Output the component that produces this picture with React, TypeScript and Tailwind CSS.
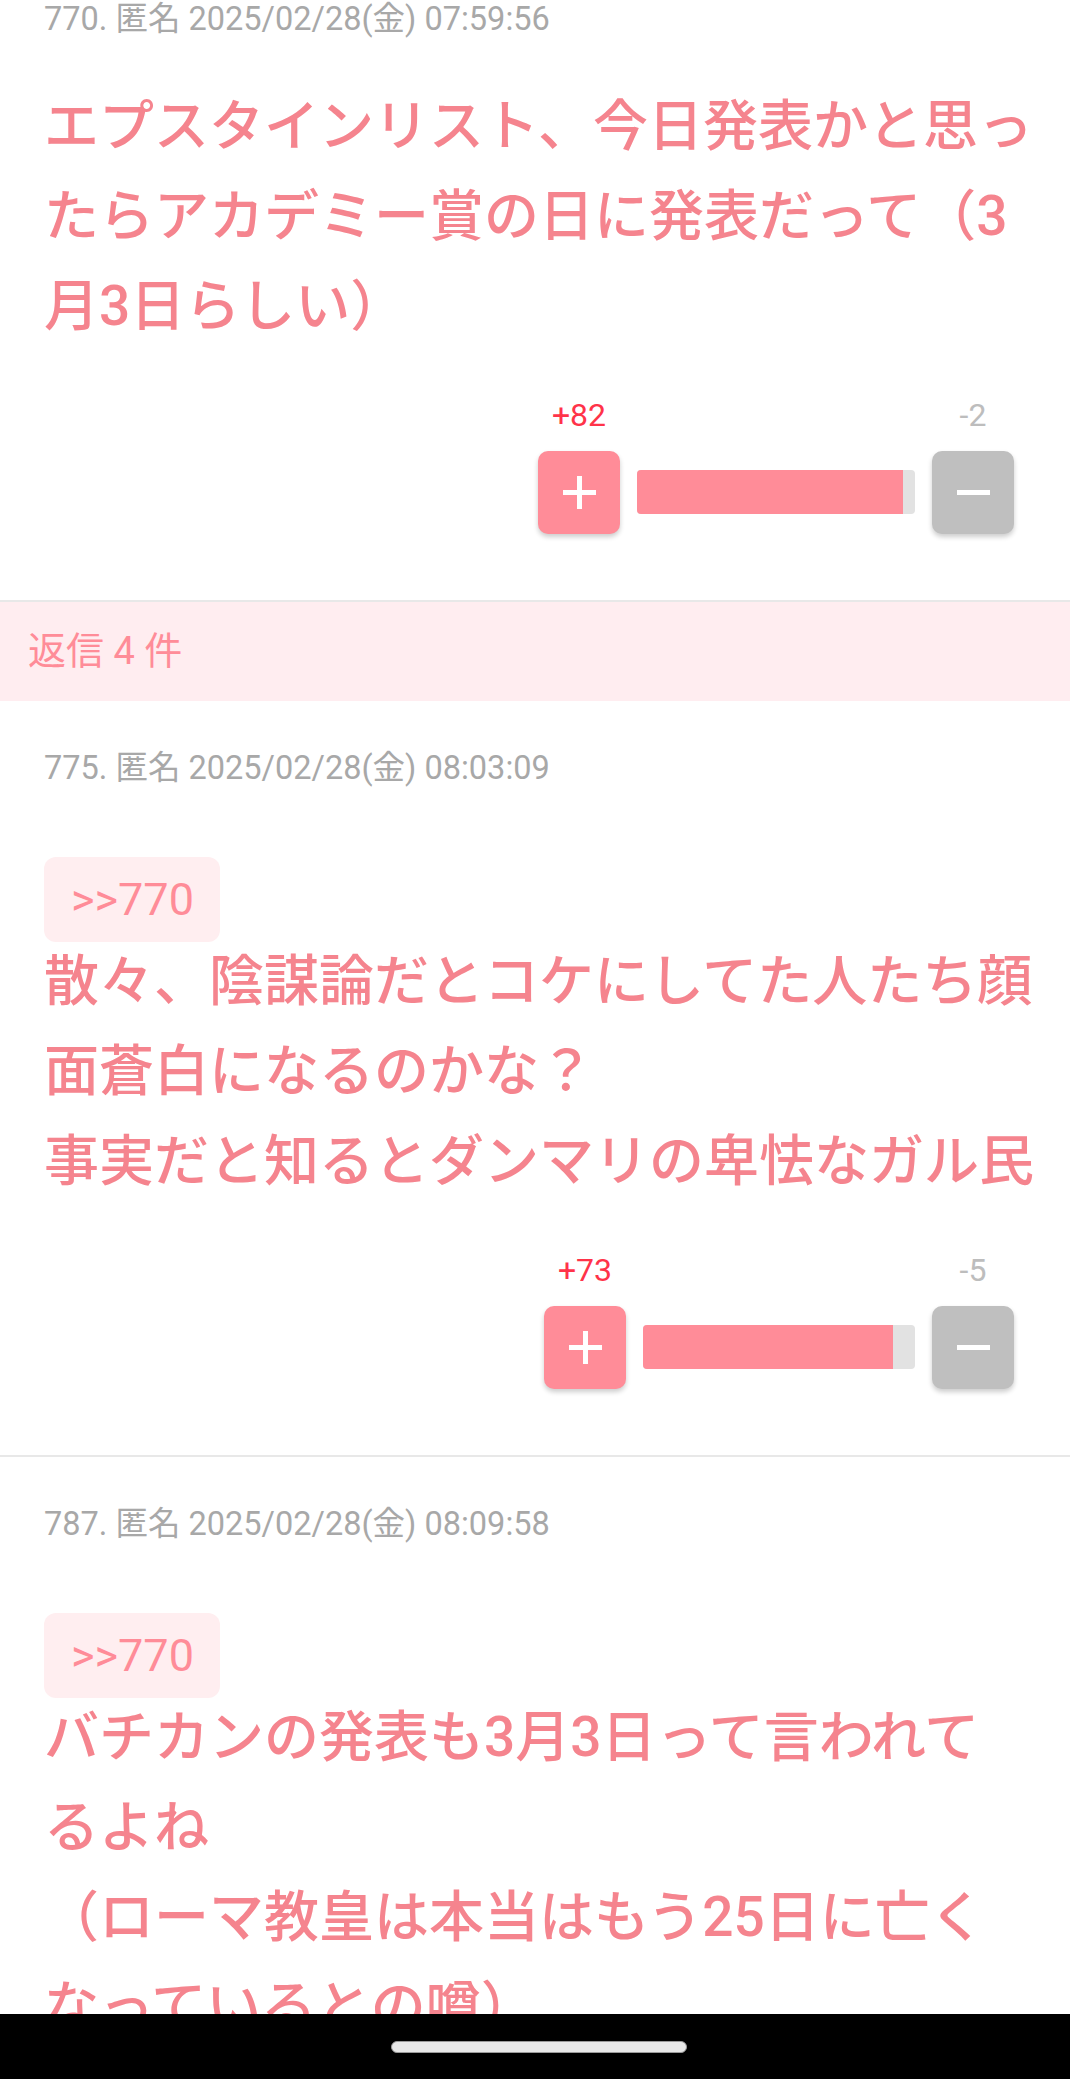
import React from 'react';

type Post = {
  no: number;
  date: string;
  replyTo?: number;
  body: string;
  plus: number;
  minus: number;
  barWidth: string;
  fill: number;
};

const posts: Post[] = [
  {
    no: 770,
    date: '2025/02/28(金) 07:59:56',
    body: 'エプスタインリスト、今日発表かと思ったらアカデミー賞の日に発表だって（3月3日らしい）',
    plus: 82,
    minus: 2,
    barWidth: 'w-[278px]',
    fill: 95.7,
  },
  {
    no: 775,
    date: '2025/02/28(金) 08:03:09',
    replyTo: 770,
    body: '散々、陰謀論だとコケにしてた人たち顔面蒼白になるのかな？\n事実だと知るとダンマリの卑怯なガル民',
    plus: 73,
    minus: 5,
    barWidth: 'w-[272px]',
    fill: 91.9,
  },
  {
    no: 787,
    date: '2025/02/28(金) 08:09:58',
    replyTo: 770,
    body: 'バチカンの発表も3月3日って言われてるよね\n（ローマ教皇は本当はもう25日に亡くなっているとの噂）',
    plus: 0,
    minus: 0,
    barWidth: 'w-[272px]',
    fill: 90,
  },
];

function VoteBar({ post }: { post: Post }) {
  return (
    <div className="flex justify-end pr-[56px] mt-[44px]">
      <div className="flex flex-col items-center">
        <span className="text-[32px] leading-[40px] text-[#ff3349]">+{post.plus}</span>
        <div className="mt-[16px] w-[82px] h-[83px] rounded-[10px] bg-[#ff8c98] shadow-[0_3px_5px_rgba(0,0,0,0.2)] flex items-center justify-center">
          <svg width="33" height="33" viewBox="0 0 33 33">
            <path d="M16.5 0v33M0 16.5h33" stroke="#fff" strokeWidth="5" />
          </svg>
        </div>
      </div>
      <div className={`${post.barWidth} h-[44px] mx-[17px] mb-[20px] self-end rounded-[4px] bg-[#e2e2e2] overflow-hidden`}>
        <div className="h-full bg-[#ff8c98]" style={{ width: `${post.fill}%` }} />
      </div>
      <div className="flex flex-col items-center">
        <span className="text-[32px] leading-[40px] text-[#bdbdbd]">-{post.minus}</span>
        <div className="mt-[16px] w-[82px] h-[83px] rounded-[10px] bg-[#bfbfbf] shadow-[0_3px_5px_rgba(0,0,0,0.2)] flex items-center justify-center">
          <svg width="33" height="33" viewBox="0 0 33 33">
            <path d="M0 16.5h33" stroke="#fff" strokeWidth="5" />
          </svg>
        </div>
      </div>
    </div>
  );
}

function PostItem({ post, first, last }: { post: Post; first?: boolean; last?: boolean }) {
  return (
    <div className={`${first ? '' : 'pt-[47px]'} ${last ? '' : 'pb-[66px] border-b-2 border-[#e8e8e8]'}`}>
      <div className={`pl-[44px] text-[32.5px] ${first ? 'leading-[38px]' : 'leading-[40px]'} text-[#a8a8a8]`}>
        {post.no}. 匿名 {post.date}
      </div>
      {post.replyTo && (
        <div className="ml-[44px] mt-[69px] w-[176px] h-[85px] rounded-[12px] bg-[#ffeef0] flex items-center pl-[27px] text-[45px] text-[#ff8c98]">
          &gt;&gt;{post.replyTo}
        </div>
      )}
      <p
        className={`${post.replyTo ? '-mt-[6px]' : 'mt-[43px]'} ml-[44px] w-[990px] text-[55px] leading-[90px] font-medium text-[#f5848e] whitespace-pre-wrap`}
      >
        {post.body}
      </p>
      {!last && <VoteBar post={post} />}
    </div>
  );
}

export default function App() {
  return (
    <div className="relative h-[2079px] overflow-hidden bg-white font-['Roboto','Noto_Sans_CJK_JP',sans-serif]">
      <PostItem post={posts[0]} first />
      <div className="h-[99px] bg-[#ffedf0] flex items-center pl-[28px] text-[38px] text-[#ff8c98]">
        返信 4 件
      </div>
      <PostItem post={posts[1]} />
      <PostItem post={posts[2]} last />
      <div className="absolute left-0 right-0 bottom-0 h-[65px] bg-black flex justify-center pt-[27px] pl-[8px]">
        <div className="w-[296px] h-[12px] rounded-full bg-[#e8e8e8] border border-[#9a9a9a]" />
      </div>
    </div>
  );
}
